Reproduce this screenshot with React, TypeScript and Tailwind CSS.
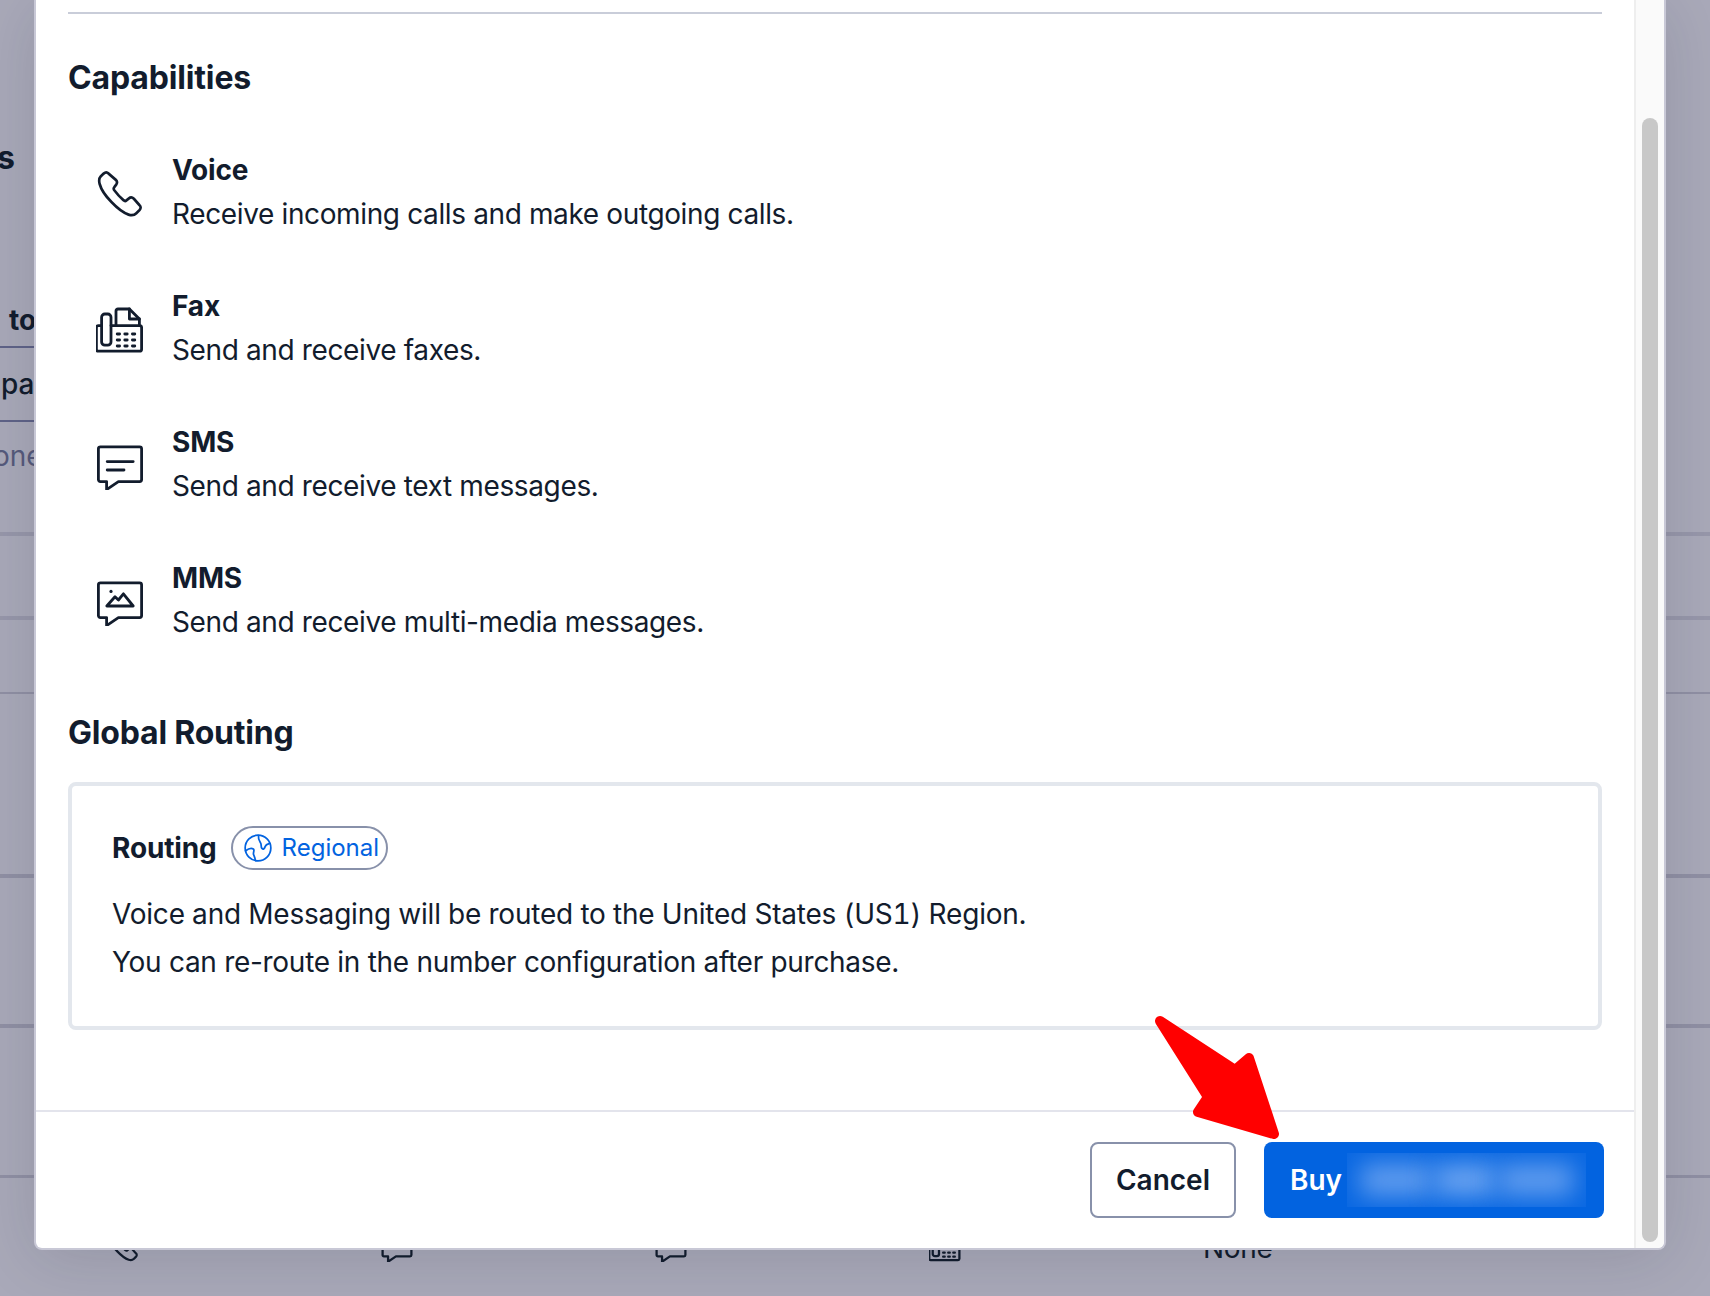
import React from "react";

type IconProps = { className: string; sw?: number };

function PhoneIcon({ className, sw = 1.4 }: IconProps) {
  return (
    <svg viewBox="0 0 24 24" fill="none" stroke="currentColor" strokeWidth={sw} strokeLinejoin="round" className={className}>
      <g transform="translate(12 12) scale(0.95 1) translate(-12 -12)">
        <path d="M6 1.8C5.2 1 4.2 1.1 3.4 1.8L1.8 3.3C1 4.1.9 5.6 1.3 7C2 9.5 4.8 13.4 7.5 16C10 18.5 13.5 21.3 16.5 22.3C18 22.8 19.6 22.6 20.6 21.6L22.3 20C23.1 19.2 23 18.2 22.3 17.6L19.3 14.4C18.5 13.6 17.5 13.5 16.7 14.2L15.4 15.2C14.9 15.6 14.3 15.5 13.8 15.1C12 13.6 10.3 11.8 8.9 10C8.6 9.5 8.6 9 9 8.6L10 7.3C10.6 6.5 10.5 5.6 9.8 4.9Z" />
      </g>
    </svg>
  );
}

function FaxIcon({ className, sw = 1.4 }: IconProps) {
  return (
    <svg viewBox="0 0 24 24" fill="none" stroke="currentColor" strokeWidth={sw} strokeLinejoin="round" strokeLinecap="round" className={className}>
      <path d="M2.8 9.8H1.2C.6 9.8.2 10.2.2 10.8V21.6C.2 22.2.6 22.6 1.2 22.6H21.8C22.4 22.6 22.8 22.2 22.8 21.6V10.8C22.8 10.2 22.4 9.8 21.8 9.8H7.5" />
      <rect x="2.8" y="4" width="4.7" height="15.6" rx="1.6" />
      <path d="M10 9.8V2.5C10 1.9 10.4 1.5 11 1.5H16.7L21.7 6.5V9.8" />
      <path d="M16.7 1.5V6.5H21.7" />
      <path d="M10.6 14H11.8M14.4 14H15.6M18.2 14H19.4M10.6 17H11.8M14.4 17H15.6M18.2 17H19.4M10.6 20H11.8M14.4 20H15.6M18.2 20H19.4" />
    </svg>
  );
}

function ChatShell() {
  return <path d="M2.2 2.4H21.8C22.4 2.4 22.8 2.8 22.8 3.4V18.8C22.8 19.4 22.4 19.8 21.8 19.8H11.2L5.3 23.8V19.8H2.2C1.6 19.8 1.2 19.4 1.2 18.8V3.4C1.2 2.8 1.6 2.4 2.2 2.4Z" />;
}

function SmsIcon({ className, sw = 1.4 }: IconProps) {
  return (
    <svg viewBox="0 0 24 24" fill="none" stroke="currentColor" strokeWidth={sw} strokeLinejoin="round" strokeLinecap="round" className={className}>
      <ChatShell />
      <path d="M5.6 9.8H18.6M5.6 14H14" />
    </svg>
  );
}

function MmsIcon({ className, sw = 1.4 }: IconProps) {
  return (
    <svg viewBox="0 0 24 24" fill="none" stroke="currentColor" strokeWidth={sw} strokeLinejoin="round" strokeLinecap="round" className={className}>
      <ChatShell />
      <circle cx="7.5" cy="6.7" r="0.8" fill="currentColor" stroke="none" />
      <path d="M5.4 14H18.6L13.7 7.9L11.2 11L9.5 9.4L5.4 14Z" />
    </svg>
  );
}

function GlobeIcon({ className }: { className: string }) {
  return (
    <svg viewBox="0 0 24 24" fill="none" stroke="currentColor" strokeWidth="1.5" strokeLinecap="round" strokeLinejoin="round" className={className}>
      <circle cx="12" cy="12" r="11" />
      <path d="M12.4 1.4C12 4.4 13.2 6 14.2 7.6C15.2 9.2 14.2 11 15.4 12.4C16.6 13.6 17.6 12.4 18.2 10.6C18.8 9 20 8.6 21.4 8.2" />
      <path d="M1.4 14.4C3.4 12.8 6.4 11.8 8 12.8C9.4 13.8 7.6 15.8 8.2 17.6C8.8 19.4 9.8 20.6 9.6 22.6" />
    </svg>
  );
}

const capabilities = [
  { title: "Voice", text: "Receive incoming calls and make outgoing calls.", Icon: PhoneIcon },
  { title: "Fax", text: "Send and receive faxes.", Icon: FaxIcon },
  { title: "SMS", text: "Send and receive text messages.", Icon: SmsIcon },
  { title: "MMS", text: "Send and receive multi-media messages.", Icon: MmsIcon },
];

function Line({ className }: { className: string }) {
  return <div className={className} />;
}

export default function App() {
  return (
    <div
      className="relative h-[1296px] w-[1710px] overflow-hidden bg-[#a9a9b9] text-[28px] text-[#121c2d]"
      style={{ fontFamily: "Inter, 'Liberation Sans', sans-serif" }}
    >
      {/* Page behind the dialog */}
      <div className="flex flex-col">
        <div className="flex h-[346px] flex-col">
          <div className="-ml-[3px] mt-[134px] h-12 text-[32px] font-bold leading-[48px]">s</div>
          <div className="mt-[118px] h-10 pl-[9px] font-bold leading-10">to</div>
        </div>
        <Line className="h-[2px] w-[200px] bg-[#5f6388]" />
        <div className="h-[72px] pl-px pt-4 font-medium leading-10">pa</div>
        <Line className="h-[2px] w-[200px] bg-[#5f6388]" />
        <div className="h-[110px] pt-4 leading-9 text-[#565a7c]">
          <span className="-ml-[7px] block">one</span>
        </div>
        <Line className="h-1 bg-[#9797aa]" />
        <div className="h-20" />
        <Line className="h-1 bg-[#9797aa]" />
        <div className="h-[72px]" />
        <Line className="h-[2px] bg-[#9090a4]" />
        <div className="h-[180px]" />
        <Line className="h-1 bg-[#9090a4]" />
        <div className="h-[146px]" />
        <Line className="h-1 bg-[#9090a4]" />
        <div className="h-[147px]" />
        <Line className="h-[3px] bg-[#9090a4]" />
        <div className="ml-[107px] mt-[46px] grid grid-cols-[274px_274px_274px_275px_auto] items-center">
          <PhoneIcon className="h-8 w-8" sw={1.7} />
          <SmsIcon className="h-8 w-8" sw={1.7} />
          <SmsIcon className="h-8 w-8" sw={1.7} />
          <FaxIcon className="h-8 w-8" sw={1.7} />
          <span className="-ml-px mt-1 leading-10 tracking-[-0.33px]">None</span>
        </div>
      </div>

      {/* Dialog */}
      <div className="absolute left-[34px] top-0 flex h-[1250px] w-[1632px] overflow-hidden rounded-b-lg border-x-2 border-b-2 border-[#c8c8d6] bg-white shadow-[0_8px_64px_rgba(18,28,45,0.14)]">
        <div className="flex min-w-0 flex-1 flex-col">
          <div className="flex-1 px-8 pt-3">
            <div className="h-[2px] bg-[#c9cdd9]" />
            <h2 className="mt-10 text-[32px] font-bold leading-[48px] tracking-[-0.15px]">Capabilities</h2>

            <div className="mt-[46px] flex flex-col gap-12">
              {capabilities.map(({ title, text, Icon }) => (
                <div key={title} className="flex items-center gap-7 pl-7">
                  <Icon className="mt-1 h-12 w-12 shrink-0" />
                  <div>
                    <div className="font-[650] leading-[44px] tracking-[-0.15px]">{title}</div>
                    <div className="leading-[44px] tracking-[-0.37px]">{text}</div>
                  </div>
                </div>
              ))}
            </div>

            <h2 className="mt-[65px] text-[32px] font-bold leading-[48px] tracking-[-0.2px]">Global Routing</h2>

            <div className="mt-[25px] rounded-lg border-4 border-[#e3e7ed] px-10 pb-10 pt-10">
              <div className="flex items-center gap-[14px]">
                <span className="-mt-px font-[650] leading-[44px] tracking-[-0.15px]">Routing</span>
                <span className="flex h-[44px] items-center gap-[10px] rounded-full border-2 border-[#8891aa] pl-[11px] pr-[7px] text-[#0263e0]">
                  <GlobeIcon className="h-7 w-7" />
                  <span className="text-[24px] leading-8">Regional</span>
                </span>
              </div>
              <p className="mt-5 leading-[48px] tracking-[-0.2px] tabular-nums">Voice and Messaging will be routed to the United States (US1) Region.</p>
              <p className="leading-[48px] tracking-[-0.29px]">You can re-route in the number configuration after purchase.</p>
            </div>
          </div>

          <div className="flex h-[138px] items-center justify-end gap-7 border-t-2 border-[#e3e4ec] pr-[30px]">
            <button className="flex h-[76px] w-[146px] items-center justify-center rounded-lg border-2 border-[#8891aa] bg-white font-semibold">
              Cancel
            </button>
            <button className="flex h-[76px] w-[340px] items-center rounded-lg bg-[#0263e0] pl-[26px] font-semibold text-white">
              Buy
              <span className="ml-[5px] flex h-[54px] w-[239px] items-center justify-center gap-1 overflow-hidden bg-[#0a68e2]">
                <span className="h-8 w-[70px] shrink-0 bg-[#609cee] blur-[12px]" />
                <span className="h-8 w-[60px] shrink-0 bg-[#6aa3f0] blur-[12px]" />
                <span className="h-8 w-[74px] shrink-0 bg-[#609cee] blur-[12px]" />
              </span>
            </button>
          </div>
        </div>

        {/* Scrollbar */}
        <div className="flex w-[30px] shrink-0 flex-col border-l-2 border-[#eeeeee] bg-[#fafafa] pb-[6px] pl-[6px] pr-[6px] pt-[118px]">
          <div className="w-4 flex-1 rounded-full bg-[#c8c8c8]" />
        </div>
      </div>

      {/* Annotation arrow */}
      <svg viewBox="0 0 1710 1296" className="pointer-events-none absolute inset-0 h-[1296px] w-[1710px]">
        <path
          d="M1160 1021L1235 1070L1249 1058L1274 1134L1198 1112L1208 1097Z"
          fill="#ff0000"
          stroke="#ff0000"
          strokeWidth="10"
          strokeLinejoin="round"
        />
      </svg>
    </div>
  );
}
